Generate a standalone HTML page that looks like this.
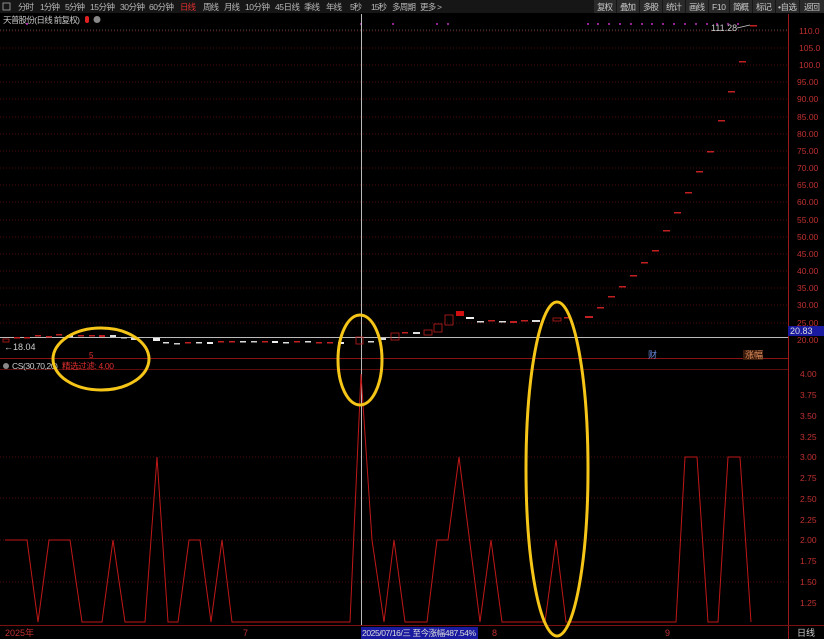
<!DOCTYPE html>
<html><head><meta charset="utf-8"><style>
html,body{margin:0;padding:0;background:#000;width:824px;height:639px;overflow:hidden}
svg{display:block}
text{font-family:"Liberation Sans","Noto Sans CJK SC",sans-serif}
</style></head><body>
<svg width="824" height="639" viewBox="0 0 824 639" xmlns="http://www.w3.org/2000/svg">
<rect width="824" height="639" fill="#000"/>
<!-- toolbar -->
<rect x="0" y="0" width="824" height="13" fill="#161616"/>
<g font-size="8.5" fill="#b8b8b8">
<rect x="3" y="3" width="7" height="7" fill="none" stroke="#aaa" stroke-width="0.8"/>
<text x="18" y="10" textLength="16">分时</text><text x="40" y="10" textLength="20">1分钟</text><text x="65" y="10" textLength="20">5分钟</text><text x="90" y="10" textLength="25">15分钟</text><text x="120" y="10" textLength="25">30分钟</text><text x="149" y="10" textLength="25">60分钟</text>
<text x="180" y="10" fill="#e03030" textLength="16">日线</text><text x="203" y="10" textLength="16">周线</text><text x="224" y="10" textLength="16">月线</text><text x="245" y="10" textLength="25">10分钟</text><text x="275" y="10" textLength="25">45日线</text><text x="304" y="10" textLength="16">季线</text><text x="326" y="10" textLength="16">年线</text><text x="350" y="10" textLength="12">5秒</text><text x="371" y="10" textLength="16">15秒</text><text x="392" y="10" textLength="24">多周期</text><text x="420" y="10" textLength="22">更多 &gt;</text>
</g>
<g font-size="8.5" fill="#c8c8c8">
<rect x="594" y="0" width="22" height="13" fill="#2a2a2a"/><text x="597" y="10" textLength="16">复权</text>
<rect x="617" y="0" width="22" height="13" fill="#2a2a2a"/><text x="620" y="10" textLength="16">叠加</text>
<rect x="640" y="0" width="22" height="13" fill="#2a2a2a"/><text x="643" y="10" textLength="16">多股</text>
<rect x="663" y="0" width="22" height="13" fill="#2a2a2a"/><text x="666" y="10" textLength="16">统计</text>
<rect x="686" y="0" width="22" height="13" fill="#2a2a2a"/><text x="689" y="10" textLength="16">画线</text>
<rect x="709" y="0" width="20" height="13" fill="#2a2a2a"/><text x="712" y="10" textLength="14">F10</text>
<rect x="730" y="0" width="22" height="13" fill="#2a2a2a"/><text x="733" y="10" textLength="16">简概</text>
<rect x="753" y="0" width="22" height="13" fill="#2a2a2a"/><text x="756" y="10" textLength="16">标记</text>
<rect x="776" y="0" width="23" height="13" fill="#2a2a2a"/><text x="778" y="10" textLength="19">•自选</text>
<rect x="800" y="0" width="24" height="13" fill="#2a2a2a"/><text x="804" y="10" textLength="16">返回</text>
</g>
<text x="3" y="23" font-size="8.5" fill="#c8c8c8" textLength="77">天普股份(日线 前复权)</text>
<rect x="85" y="16" width="4" height="7" rx="2" fill="#e02020"/>
<circle cx="97" cy="19.5" r="3.5" fill="#888"/>
<!-- right axis -->
<line x1="788.5" y1="14" x2="788.5" y2="639" stroke="#9a1818"/>
<line x1="0" y1="625.5" x2="824" y2="625.5" stroke="#7a1010"/>
<line x1="0" y1="358.5" x2="788" y2="358.5" stroke="#8a1414"/>
<line x1="0" y1="369.5" x2="788" y2="369.5" stroke="#5a0c0c"/>
<!-- price grid -->
<g stroke="#4a0c0c" stroke-dasharray="1 2">
<line x1="0" y1="31" x2="788" y2="31"/><line x1="0" y1="48" x2="788" y2="48"/><line x1="0" y1="65" x2="788" y2="65"/><line x1="0" y1="82" x2="788" y2="82"/><line x1="0" y1="99" x2="788" y2="99"/><line x1="0" y1="117" x2="788" y2="117"/><line x1="0" y1="134" x2="788" y2="134"/><line x1="0" y1="151" x2="788" y2="151"/><line x1="0" y1="168" x2="788" y2="168"/><line x1="0" y1="185" x2="788" y2="185"/><line x1="0" y1="202" x2="788" y2="202"/><line x1="0" y1="220" x2="788" y2="220"/><line x1="0" y1="237" x2="788" y2="237"/><line x1="0" y1="254" x2="788" y2="254"/><line x1="0" y1="271" x2="788" y2="271"/><line x1="0" y1="288" x2="788" y2="288"/><line x1="0" y1="305" x2="788" y2="305"/><line x1="0" y1="323" x2="788" y2="323"/>
<line x1="0" y1="457" x2="788" y2="457"/><line x1="0" y1="498" x2="788" y2="498"/><line x1="0" y1="540" x2="788" y2="540"/><line x1="0" y1="582" x2="788" y2="582"/>
</g>
<line x1="0" y1="30" x2="788" y2="30" stroke="#444" stroke-dasharray="1 2"/>
<g font-size="8.5" fill="#c03030">
<text x="799" y="34">110.0</text><text x="799" y="51">105.0</text><text x="799" y="68">100.0</text><text x="797" y="85">95.00</text><text x="797" y="102">90.00</text><text x="797" y="120">85.00</text><text x="797" y="137">80.00</text><text x="797" y="154">75.00</text><text x="797" y="171">70.00</text><text x="797" y="188">65.00</text><text x="797" y="205">60.00</text><text x="797" y="223">55.00</text><text x="797" y="240">50.00</text><text x="797" y="257">45.00</text><text x="797" y="274">40.00</text><text x="797" y="291">35.00</text><text x="797" y="308">30.00</text><text x="797" y="326">25.00</text><text x="797" y="343">20.00</text>
<text x="800" y="377">4.00</text><text x="800" y="398">3.75</text><text x="800" y="419">3.50</text><text x="800" y="440">3.25</text><text x="800" y="460">3.00</text><text x="800" y="481">2.75</text><text x="800" y="502">2.50</text><text x="800" y="523">2.25</text><text x="800" y="543">2.00</text><text x="800" y="564">1.75</text><text x="800" y="585">1.50</text><text x="800" y="606">1.25</text>
</g>
<rect x="788" y="326" width="36" height="10" fill="#1a1aa0"/>
<text x="790" y="334" font-size="9" fill="#ddd">20.83</text>
<!-- dots -->
<g fill="#c030c0">
<circle cx="27" cy="24" r="1"/><circle cx="361" cy="24" r="1"/><circle cx="393" cy="24" r="1"/><circle cx="437" cy="24" r="1"/><circle cx="448" cy="24" r="1"/>
<circle cx="588" cy="24" r="1"/><circle cx="598" cy="24" r="1"/><circle cx="609" cy="24" r="1"/><circle cx="620" cy="24" r="1"/><circle cx="631" cy="24" r="1"/><circle cx="642" cy="24" r="1"/><circle cx="652" cy="24" r="1"/><circle cx="663" cy="24" r="1"/><circle cx="674" cy="24" r="1"/><circle cx="685" cy="24" r="1"/><circle cx="696" cy="24" r="1"/><circle cx="707" cy="24" r="1"/><circle cx="717" cy="24" r="1"/><circle cx="728" cy="24" r="1"/><circle cx="738" cy="24" r="1"/>
</g>
<text x="711" y="31" font-size="9" fill="#ccc">111.28</text>
<line x1="737" y1="28" x2="750" y2="25" stroke="#ccc" stroke-width="0.7"/>
<!-- crosshair -->
<line x1="361.5" y1="14" x2="361.5" y2="625" stroke="#bbb"/>
<line x1="0" y1="337.5" x2="788" y2="337.5" stroke="#bbb"/>
<!-- candles -->
<g>
<rect x="3" y="339" width="6" height="3" fill="none" stroke="#c02020" stroke-width="0.8"/>
<rect x="14" y="337" width="6" height="1.5" fill="#c02020"/><rect x="24" y="337" width="6" height="1.5" fill="#c02020"/><rect x="35" y="335" width="6" height="1.5" fill="#c02020"/><rect x="46" y="336" width="6" height="1.5" fill="#c02020"/><rect x="56" y="334" width="6" height="1.5" fill="#c02020"/>
<rect x="67" y="335" width="6" height="2" fill="#ddd"/><rect x="78" y="335" width="6" height="1.5" fill="#c02020"/><rect x="89" y="335" width="6" height="1.5" fill="#c02020"/><rect x="99" y="335" width="6" height="2" fill="#c02020"/><rect x="110" y="335" width="6" height="2" fill="#ddd"/><rect x="121" y="337" width="6" height="1.5" fill="#ccc"/><rect x="131" y="338" width="6" height="2" fill="#ddd"/><rect x="153" y="338" width="7" height="3" fill="#eee"/><rect x="163" y="342" width="6" height="1.5" fill="#ddd"/><rect x="174" y="343" width="6" height="1.5" fill="#ccc"/><rect x="185" y="342" width="6" height="1.5" fill="#c02020"/><rect x="196" y="342" width="6" height="1.5" fill="#ddd"/><rect x="207" y="342" width="6" height="2" fill="#eee"/><rect x="218" y="341" width="6" height="1.5" fill="#c02020"/><rect x="229" y="341" width="6" height="1.5" fill="#c02020"/><rect x="240" y="341" width="6" height="1.5" fill="#ddd"/><rect x="251" y="341" width="6" height="1.5" fill="#ccc"/><rect x="262" y="341" width="6" height="1.5" fill="#c02020"/><rect x="272" y="341" width="6" height="2" fill="#eee"/><rect x="283" y="342" width="6" height="1.5" fill="#ddd"/><rect x="294" y="341" width="6" height="1.5" fill="#c02020"/><rect x="305" y="341" width="6" height="1.5" fill="#ddd"/><rect x="316" y="342" width="6" height="1.5" fill="#c02020"/><rect x="327" y="342" width="6" height="1.5" fill="#c02020"/><rect x="338" y="342" width="6" height="2" fill="#eee"/><rect x="356" y="337" width="7" height="7" fill="none" stroke="#c02020" stroke-width="0.8"/>
<rect x="368" y="341" width="6" height="1.5" fill="#ddd"/>
<rect x="380" y="338" width="6" height="2" fill="#ddd"/><rect x="391" y="333" width="8" height="7" fill="none" stroke="#c02020" stroke-width="0.8"/><rect x="402" y="332" width="6" height="1.5" fill="#c02020"/><rect x="413" y="332" width="7" height="2" fill="#ddd"/><rect x="424" y="330" width="8" height="5" fill="none" stroke="#c02020" stroke-width="0.8"/><rect x="434" y="324" width="8" height="8" fill="none" stroke="#c02020" stroke-width="0.8"/><rect x="445" y="315" width="8" height="10" fill="none" stroke="#c02020" stroke-width="0.8"/><rect x="456" y="311" width="8" height="5" fill="#d01010"/><rect x="466" y="317" width="8" height="2" fill="#eee"/><rect x="477" y="321" width="7" height="1.5" fill="#ddd"/><rect x="488" y="320" width="7" height="1.5" fill="#c02020"/><rect x="499" y="321" width="7" height="1.5" fill="#ddd"/><rect x="510" y="321" width="7" height="2" fill="#c02020"/><rect x="521" y="320" width="7" height="1.5" fill="#c02020"/><rect x="532" y="320" width="8" height="2" fill="#ddd"/><rect x="553" y="318" width="8" height="3" fill="none" stroke="#c02020" stroke-width="0.8"/><rect x="564" y="317" width="7" height="1.5" fill="#c02020"/><rect x="585" y="316" width="8" height="2" fill="#c02020"/>
<rect x="597" y="307" width="7" height="1.5" fill="#c02020"/><rect x="608" y="296" width="7" height="1.5" fill="#c02020"/><rect x="619" y="286" width="7" height="1.5" fill="#c02020"/><rect x="630" y="275" width="7" height="1.5" fill="#c02020"/><rect x="641" y="262" width="7" height="1.5" fill="#c02020"/><rect x="652" y="250" width="7" height="1.5" fill="#c02020"/><rect x="663" y="230" width="7" height="1.5" fill="#c02020"/><rect x="674" y="212" width="7" height="1.5" fill="#c02020"/><rect x="685" y="192" width="7" height="1.5" fill="#c02020"/><rect x="696" y="171" width="7" height="1.5" fill="#c02020"/><rect x="707" y="151" width="7" height="1.5" fill="#c02020"/><rect x="718" y="120" width="7" height="1.5" fill="#c02020"/><rect x="728" y="91" width="7" height="1.5" fill="#c02020"/><rect x="739" y="61" width="7" height="1.5" fill="#c02020"/><rect x="750" y="25" width="7" height="1.5" fill="#c02020"/>
</g>
<text x="4" y="350" font-size="9" fill="#ccc">←18.04</text>
<text x="89" y="358" font-size="8" fill="#e03030">5</text>
<text x="648" y="358" font-size="9" fill="#6a8adf">财</text>
<rect x="743" y="350" width="20" height="10" fill="#3a1a0a"/><text x="745" y="358" font-size="9" fill="#e09060">涨幅</text>
<!-- indicator header -->
<circle cx="6" cy="366" r="3" fill="#888"/>
<text x="12" y="369" font-size="8.5" fill="#ccc" textLength="46">CS(30,70,20)</text>
<text x="62" y="369" font-size="8.5" fill="#e03030" textLength="52">精选过滤: 4.00</text>
<!-- indicator line -->
<polyline fill="none" stroke="#c01818" stroke-width="1" points="5,540 27,540 38,622 49,540 70,540 82,622 102,622 113,540 125,622 145,622 157,457 168,622 178,622 189,540 200,540 211,622 222,540 232,622 350,622 361,374 372,540 384,622 394,540 405,622 427,622 437,540 448,540 459,457 480,622 491,540 502,622 545,622 556,540 566,622 676,622 685,457 697,457 708,622 718,622 728,457 740,457 751,622"/>
<!-- bottom axis -->
<g font-size="9" fill="#c03030">
<text x="5" y="636">2025年</text><text x="243" y="636">7</text><text x="492" y="636">8</text><text x="665" y="636">9</text>
</g>
<rect x="361" y="627" width="117" height="12" fill="#1a1aa0"/>
<text x="362" y="636" font-size="8.5" fill="#ddd" textLength="114">2025/07/16/三 至今涨幅487.54%</text>
<text x="797" y="636" font-size="9" fill="#ccc">日线</text>
<!-- yellow ellipses -->
<g fill="none" stroke="#f5c518" stroke-width="3">
<ellipse cx="101" cy="359" rx="48" ry="31"/>
<ellipse cx="360" cy="360" rx="22" ry="45"/>
<ellipse cx="557" cy="469" rx="31" ry="167"/>
</g>
</svg>
</body></html>
